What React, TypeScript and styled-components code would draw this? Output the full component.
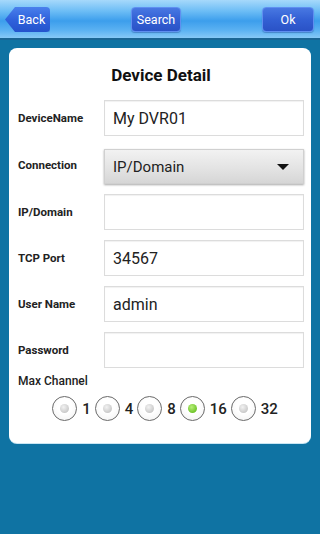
import styled, { createGlobalStyle, css } from 'styled-components';

const GlobalStyle = createGlobalStyle`
    html, body, #root {
        margin: 0;
        height: 100%;
    }
    body {
        background-color: #0f73a3;
        font-family: Roboto, 'Liberation Sans', sans-serif;
    }
`;

const fields = [
    { label: 'DeviceName', value: 'My DVR01' },
    { label: 'IP/Domain', value: '' },
    { label: 'TCP Port', value: '34567' },
    { label: 'User Name', value: 'admin' },
    { label: 'Password', value: '' },
];

const channels = ['1', '4', '8', '16', '32'];

const App = () => {
    const [first, ...rest] = fields;

    return (
        <Page>
            <GlobalStyle />
            <Header>
                <BackButton>Back</BackButton>
                <NavButton>Search</NavButton>
                <NavButton $wide>Ok</NavButton>
            </Header>
            <Content>
                <Card>
                    <Title>Device Detail</Title>
                    <Form>
                        <Label>{first.label}</Label>
                        <Input>{first.value}</Input>
                        <Label>Connection</Label>
                        <Select>
                            IP/Domain
                            <Caret />
                        </Select>
                        {rest.map((f) => (
                            <Row key={f.label}>
                                <Label>{f.label}</Label>
                                <Input>{f.value}</Input>
                            </Row>
                        ))}
                    </Form>
                    <ChannelLabel>Max Channel</ChannelLabel>
                    <RadioGroup>
                        {channels.map((c) => (
                            <RadioItem key={c}>
                                <Circle>
                                    <Dot $checked={c === '16'} />
                                </Circle>
                                <RadioText>{c}</RadioText>
                            </RadioItem>
                        ))}
                    </RadioGroup>
                </Card>
            </Content>
        </Page>
    );
};

export default App;

const Page = styled.div`
    min-height: 100%;
    background-color: #0f73a3;
`;

const Header = styled.header`
    height: 38px;
    display: flex;
    align-items: center;
    justify-content: space-between;
    padding: 0 6px 0 5px;
    background: linear-gradient(
        to bottom,
        #a6d9fb 0%,
        #6bbcf5 30%,
        #3c9eec 55%,
        #5cb2f2 80%,
        #86c8f6 100%
    );
    border-bottom: 2px solid #1a6594;
`;

const buttonBase = css`
    height: 25px;
    margin-top: 1px;
    border: 1px solid #5f8ff0;
    border-radius: 4px;
    background: linear-gradient(to bottom, #4878e2 0%, #3360d4 50%, #2a52c6 100%);
    color: #ffffff;
    font-family: Roboto, 'Liberation Sans', sans-serif;
    font-size: 12.5px;
    padding: 0;
    box-shadow: 0 1px 1px rgba(20, 60, 140, 0.4);
`;

const NavButton = styled.button<{ $wide?: boolean }>`
    ${buttonBase};
    width: ${({ $wide }) => ($wide ? '52px' : '50px')};
`;

const BackButton = styled.button`
    ${buttonBase};
    width: 45px;
    padding-left: 8px;
    border: none;
    clip-path: polygon(10px 0, 100% 0, 100% 100%, 10px 100%, 0 50%);
    background: linear-gradient(to bottom, #4a80ec 0%, #2f62dc 50%, #2453cc 100%);
`;

const Content = styled.main`
    padding: 8px 9px;
`;

const Card = styled.section`
    background: #ffffff;
    border-radius: 8px;
    padding: 15px 7px 22px 9px;
    box-shadow: 0 1px 0 #c9e6f3;
`;

const Title = styled.h1`
    margin: 0 0 13px;
    text-align: center;
    font-size: 17px;
    line-height: 24px;
    font-weight: 700;
    color: #111111;
`;

const Form = styled.div`
    display: grid;
    grid-template-columns: 86px 1fr;
    row-gap: 10px;
    align-items: center;
`;

const Row = styled.div`
    display: contents;
`;

const Label = styled.span`
    font-size: 11.5px;
    font-weight: 700;
    color: #222222;
`;

const Input = styled.div`
    height: 36px;
    box-sizing: border-box;
    border: 1px solid #dcdcdc;
    box-shadow: inset 0 1px 1px rgba(0, 0, 0, 0.06);
    padding-left: 8px;
    display: flex;
    align-items: center;
    font-size: 16px;
    color: #222222;
`;

const Select = styled.div`
    height: 35px;
    margin: 3px 0 0;
    box-sizing: border-box;
    padding: 0 14px 0 8px;
    display: flex;
    align-items: center;
    justify-content: space-between;
    background: linear-gradient(to bottom, #f2f2f2 0%, #e2e2e2 60%, #d6d6d6 100%);
    border: 1px solid #d0d0d0;
    box-shadow: 0 1px 2px rgba(0, 0, 0, 0.35);
    font-size: 15px;
    color: #222222;
`;

const Caret = styled.span`
    width: 0;
    height: 0;
    border-left: 6px solid transparent;
    border-right: 6px solid transparent;
    border-top: 6px solid #111111;
`;

const ChannelLabel = styled.div`
    margin-top: 6px;
    font-size: 12px;
    line-height: 15px;
    font-weight: 500;
    color: #222222;
`;

const RadioGroup = styled.div`
    margin-top: 7px;
    display: flex;
    justify-content: center;
    gap: 4px;
    padding-left: 8px;
`;

const RadioItem = styled.label`
    display: flex;
    align-items: center;
    gap: 5px;
`;

const Circle = styled.span`
    flex: none;
    width: 25px;
    height: 25px;
    box-sizing: border-box;
    border-radius: 50%;
    border: 1.5px solid #6a6a6a;
    background: radial-gradient(circle at 50% 40%, #ffffff 40%, #f0f0f0 100%);
    display: flex;
    align-items: center;
    justify-content: center;
`;

const Dot = styled.span<{ $checked: boolean }>`
    width: 9px;
    height: 9px;
    border-radius: 50%;
    background: ${({ $checked }) =>
        $checked
            ? 'radial-gradient(circle at 40% 35%, #b8f07a 0%, #6fc42a 70%)'
            : 'radial-gradient(circle at 40% 35%, #f2f2f2 0%, #c4c4c4 80%)'};
`;

const RadioText = styled.span`
    font-size: 15px;
    font-weight: 500;
    color: #222222;
`;
